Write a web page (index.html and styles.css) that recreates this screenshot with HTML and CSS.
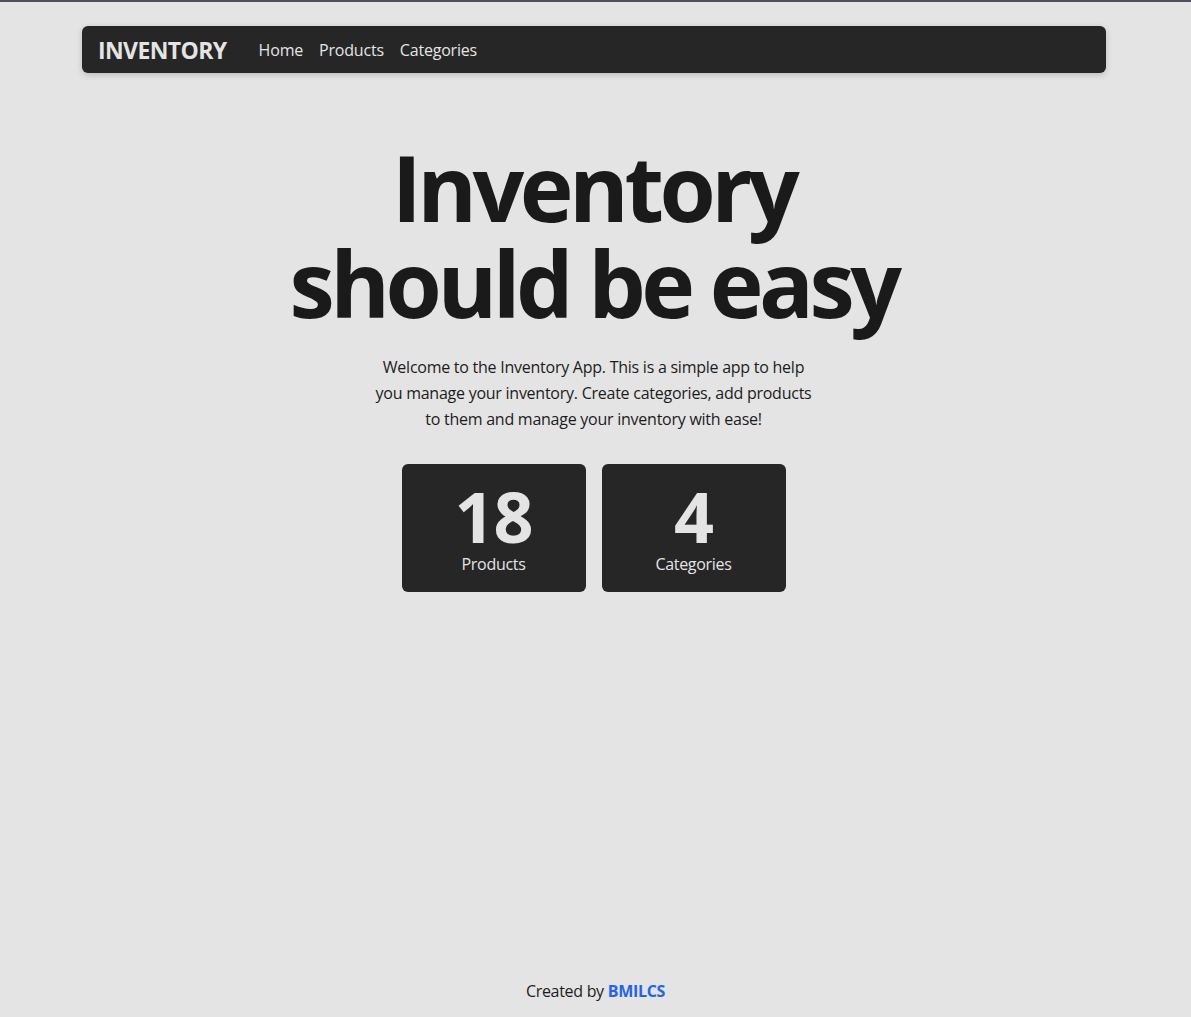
FILE: index.html
```html
<!DOCTYPE html>
<html lang="en">
<head>
<meta charset="utf-8">
<title>Inventory</title>
<link rel="stylesheet" href="styles.css">
</head>
<body>
<div class="page">
  <header class="nav-wrap">
    <nav class="navbar">
      <a class="brand" href="#">INVENTORY</a>
      <ul class="links">
        <li><a href="#">Home</a></li>
        <li><a href="#">Products</a></li>
        <li><a href="#">Categories</a></li>
      </ul>
    </nav>
  </header>
  <main class="hero">
    <h1 class="title">Inventory<br>should be easy</h1>
    <p class="lead">Welcome to the Inventory App. This is a simple app to help you manage your inventory. Create categories, add products to them and manage your inventory with ease!</p>
    <div class="stats">
      <div class="stat"><span class="num">18</span><span class="label">Products</span></div>
      <div class="stat"><span class="num">4</span><span class="label">Categories</span></div>
    </div>
  </main>
  <footer class="footer">Created by <a href="#" class="author">BMILCS</a></footer>
</div>
</body>
</html>
```

FILE: styles.css
```css
* { box-sizing: border-box; }
html, body { margin: 0; padding: 0; }
body {
  background: #e4e4e4;
  color: #1c1c1c;
  font-family: "Open Sans", "Noto Sans", sans-serif;
  border-top: 2px solid #4d4d5c;
}
.page {
  min-height: calc(100vh - 2px);
  display: flex;
  flex-direction: column;
}
.nav-wrap {
  padding-top: 24px;
  display: flex;
  justify-content: center;
}
.navbar {
  width: 1024px;
  margin-right: 3px;
  height: 47px;
  background: #262626;
  border-radius: 6px;
  box-shadow: 0 2px 6px rgba(0,0,0,0.18);
  display: flex;
  align-items: center;
  padding: 0 16px;
  gap: 32px;
}
.brand {
  color: #e4e4e4;
  text-decoration: none;
  font-weight: 700;
  font-size: 23px;
  letter-spacing: -0.6px;
}
.links {
  list-style: none;
  margin: 0;
  padding: 0;
  display: flex;
  gap: 16px;
}
.links a {
  color: #e4e4e4;
  text-decoration: none;
  font-size: 16px;
  letter-spacing: -0.2px;
}
.hero {
  flex: 1;
  display: flex;
  flex-direction: column;
  align-items: center;
  padding-top: 66px;
  margin-right: 4px;
}
.title {
  margin: 0;
  font-size: 91px;
  line-height: 96px;
  font-weight: 700;
  text-align: center;
  color: #1a1a1a;
  letter-spacing: -4.5px;
}
.lead {
  margin: 23px 0 0;
  max-width: 448px;
  text-align: center;
  font-size: 16px;
  line-height: 26px;
  letter-spacing: -0.25px;
  color: #1c1c1c;
}
.stats {
  margin-top: 32px;
  display: flex;
  gap: 16px;
}
.stat {
  width: 184px;
  height: 128px;
  background: #262626;
  border-radius: 6px;
  display: flex;
  flex-direction: column;
  align-items: center;
  padding-top: 16px;
  color: #e4e4e4;
}
.num {
  font-size: 70px;
  line-height: 72px;
  font-weight: 700;
  letter-spacing: -1px;
}
.label {
  font-size: 16px;
  line-height: 24px;
  letter-spacing: -0.3px;
}
.footer {
  text-align: center;
  font-size: 16px;
  line-height: 24px;
  padding: 0 0 14px;
  color: #1c1c1c;
  letter-spacing: -0.3px;
}
.author {
  color: #2563eb;
  font-weight: 700;
  text-decoration: none;
}
```
